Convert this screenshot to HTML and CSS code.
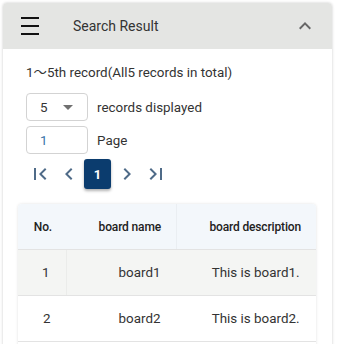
FILE: index.html
```html
<!DOCTYPE html>
<html>
<head>
<meta charset="utf-8">
<link rel="stylesheet" href="styles.css">
</head>
<body>
<div class="card">
  <div class="card-header">
    <div class="hamburger"><span></span><span></span><span></span></div>
    <div class="title">Search Result</div>
    <svg class="chevron" width="24" height="24" viewBox="0 0 24 24"><path d="M7.41 15.41L12 10.83l4.59 4.58L18 14l-6-6-6 6z" fill="#666"/></svg>
  </div>
  <div class="card-body">
    <div class="summary">1～5th record(All5 records in total)</div>
    <div class="form-row">
      <div class="box select"><span class="val">5</span><span class="tri"></span></div>
      <span class="label">records displayed</span>
    </div>
    <div class="form-row">
      <div class="box"><span class="val blue">1</span></div>
      <span class="label">Page</span>
    </div>
    <div class="pager">
      <span class="pbtn"><svg width="24" height="24" viewBox="0 0 24 24"><path d="M18.41 16.59L13.82 12l4.59-4.59L17 6l-6 6 6 6zM6 6h2v12H6z"/></svg></span>
      <span class="pbtn"><svg width="24" height="24" viewBox="0 0 24 24"><path d="M15.41 7.41L14 6l-6 6 6 6 1.41-1.41L10.83 12z"/></svg></span>
      <span class="pbtn active">1</span>
      <span class="pbtn"><svg width="24" height="24" viewBox="0 0 24 24"><path d="M10 6L8.59 7.41 13.17 12l-4.58 4.59L10 18l6-6z"/></svg></span>
      <span class="pbtn"><svg width="24" height="24" viewBox="0 0 24 24"><path d="M5.59 7.41L10.18 12l-4.59 4.59L7 18l6-6-6-6zM16 6h2v12h-2z"/></svg></span>
    </div>
    <div class="table">
      <div class="tr head">
        <div class="td c1">No.</div>
        <div class="td c2 sep">board name</div>
        <div class="td c3">board description</div>
      </div>
      <div class="tr odd">
        <div class="td c1 sep">1</div>
        <div class="td c2">board1</div>
        <div class="td c3">This is board1.</div>
      </div>
      <div class="tr">
        <div class="td c1">2</div>
        <div class="td c2">board2</div>
        <div class="td c3">This is board2.</div>
      </div>
      <div class="tr">
        <div class="td c1"></div>
        <div class="td c2"></div>
        <div class="td c3"></div>
      </div>
    </div>
  </div>
</div>
</body>
</html>
```
FILE: styles.css
```css
html, body {
  margin: 0;
  padding: 0;
  background: #fff;
  font-family: Roboto, "Noto Sans CJK JP", sans-serif;
  color: #333;
  overflow: hidden;
}
.card {
  margin: 3px 0 0 3px;
  width: 329px;
  height: 400px;
  border-radius: 4px 4px 0 0;
  box-shadow: 0 0 3px rgba(0,0,0,0.22);
  background: #fff;
}
.card-header {
  height: 46px;
  background: #e4e5e3;
  border-radius: 4px 4px 0 0;
  display: flex;
  align-items: center;
  padding-left: 18px;
  box-sizing: border-box;
}
.hamburger {
  width: 18px;
  height: 18px;
  display: flex;
  flex-direction: column;
  justify-content: space-between;
}
.hamburger span {
  display: block;
  height: 2px;
  background: #111;
}
.title {
  margin-left: 34px;
  font-size: 14px;
  color: #333;
  flex: 1;
}
.chevron {
  margin-right: 15px;
}
.card-body {
  padding: 14px 0 0 15px;
}
.summary {
  font-size: 13.4px;
  line-height: 20px;
  padding-left: 8px;
  margin-bottom: 10px;
}
.form-row {
  display: flex;
  align-items: center;
  padding-left: 8px;
  margin-bottom: 5px;
  height: 28px;
}
.box {
  width: 62px;
  height: 28px;
  box-sizing: border-box;
  border: 1px solid #d3d3d3;
  border-radius: 4px;
  display: flex;
  align-items: center;
  padding-left: 13px;
  font-size: 13.4px;
}
.val { color: #333; }
.val.blue { color: #3a74a8; }
.tri {
  margin-left: 15px;
  width: 0;
  height: 0;
  border-left: 5px solid transparent;
  border-right: 5px solid transparent;
  border-top: 5px solid #707070;
}
.label {
  margin-left: 9px;
  font-size: 13.4px;
}
.pager {
  display: flex;
  align-items: center;
  gap: 2px;
  padding-left: 8px;
  height: 30px;
}
.pbtn {
  width: 27px;
  height: 30px;
  display: flex;
  align-items: center;
  justify-content: center;
  fill: #4f6b88;
}
.pbtn.active {
  background: #0b3c6e;
  color: #fff;
  font-weight: 700;
  font-size: 13px;
  border-radius: 3px;
  box-shadow: 0 2px 3px rgba(0,0,0,0.3);
}
.table {
  margin-top: 15px;
  width: 298px;
  border-radius: 4px 4px 0 0;
  box-shadow: 0 0 3px rgba(0,0,0,0.12);
}
.tr {
  display: flex;
  height: 46px;
  border-bottom: 1px solid #e3e3e3;
  box-sizing: border-box;
}
.tr.head {
  background: #f3f7fb;
  border-radius: 4px 4px 0 0;
}
.tr.odd { background: #f4f5f3; }
.td {
  display: flex;
  align-items: center;
  justify-content: flex-end;
  padding-right: 16.5px;
  box-sizing: border-box;
  font-size: 13.4px;
}
.td.sep {
  border-right: 1px solid rgba(0,0,0,0.035);
}
.head .td {
  font-size: 12px;
  font-weight: 500;
  letter-spacing: -0.15px;
  color: #222;
  padding-right: 15px;
}
.c1 { width: 49px; }
.c2 { width: 110px; }
.c3 { width: 139px; }
```
